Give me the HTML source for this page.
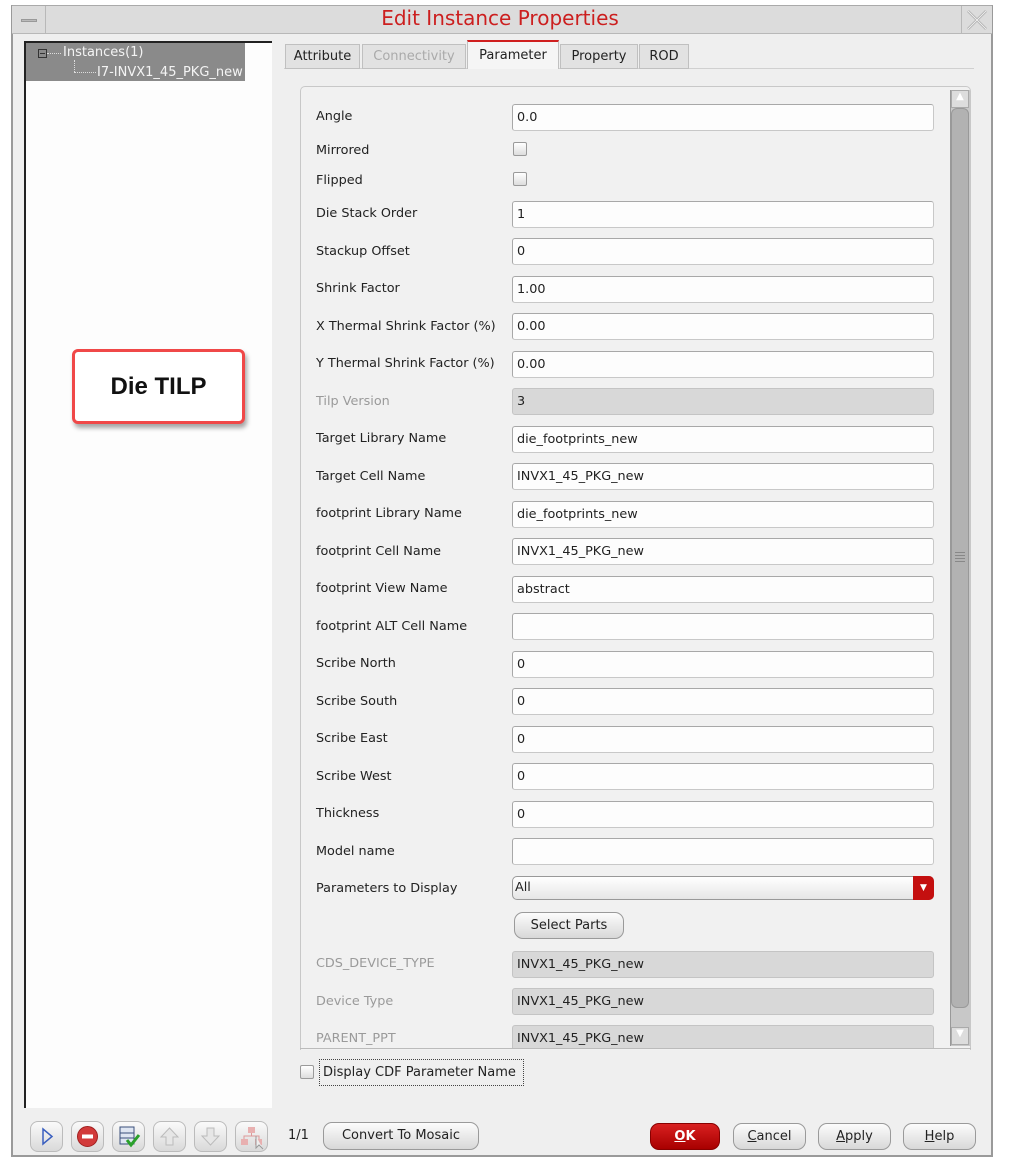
<!DOCTYPE html>
<html><head><meta charset="utf-8">
<style>
*{margin:0;padding:0;box-sizing:border-box}
body{width:1013px;height:1159px;background:#fff;position:relative;overflow:hidden;font-family:"DejaVu Sans","Liberation Sans",sans-serif;font-size:12.8px;color:#222}
.a{position:absolute}
.win{left:11px;top:5px;width:982px;height:1152px;background:#efefef;border:2px solid #9a9a9a;border-top:1px solid #aaa}
.title{left:12px;top:6px;width:980px;height:28px;background:#dcdcdc;border-bottom:1px solid #b8b8b8}
.lbl{position:absolute;left:316px;white-space:nowrap}
.fld{position:absolute;left:512px;width:422px;height:27px;background:#fdfdfd;border:1px solid #c8c8c8;border-top-color:#a8a8a8;border-left-color:#a8a8a8;border-radius:3px;padding:5px 0 0 4px;white-space:nowrap}
.gr{background:#d8d8d8;border-color:#c4c4c4}
.dis{color:#9a9a9a}
.cb{position:absolute;left:513px;width:14px;height:14px;border:1px solid #9a9a9a;border-radius:2px;background:linear-gradient(#fff,#ddd)}
.btn{position:absolute;height:27px;border:1px solid #9a9a9a;border-radius:9px;background:linear-gradient(#fcfcfc,#d8d8d8);text-align:center;line-height:25px;font-size:13px}
.tab{position:absolute;top:44px;height:25px;background:#e2e2e2;border:1px solid #c0c0c0;text-align:center;line-height:23px;font-size:13px}
.ib{position:absolute;top:1121px;width:33px;height:31px;border:1px solid #bbb;border-radius:8px;background:linear-gradient(#fafafa,#d9d9d9)}
</style></head><body>
<div class="a win"></div>
<div class="a title"></div>
<div class="a" style="left:12px;top:6px;width:34px;height:28px;border-right:1px solid #b8b8b8"><div class="a" style="left:9px;top:13px;width:16px;height:3px;background:#bbb;border:1px solid #999"></div></div>
<div class="a" style="left:0;top:6px;width:1000px;text-align:center;color:#cc1f1f;font-size:20px">Edit Instance Properties</div>
<div class="a" style="left:961px;top:6px;width:30px;height:28px;border-left:1px solid #b8b8b8"><svg width="30" height="28"><path d="M6 5 L24 23 M24 5 L6 23" stroke="#aaa" stroke-width="2.5"/><path d="M6 5 L24 23 M24 5 L6 23" stroke="#eee" stroke-width="1"/></svg></div>

<div class="a" style="left:24px;top:41px;width:248px;height:1067px;background:#fdfdfd;border-left:2px solid #222;border-top:2px solid #222"></div>
<div class="a" style="left:26px;top:43px;width:219px;height:38px;background:#8a8a8a"></div>
<div class="a" style="left:38px;top:49px;width:9px;height:9px;border:1px solid #333"><div class="a" style="left:1px;top:3px;width:5px;height:1px;background:#333"></div></div>
<div class="a" style="left:47px;top:53px;width:14px;border-top:1px dotted #ddd"></div>
<div class="a" style="left:74px;top:60px;height:12px;border-left:1px dotted #ddd"></div>
<div class="a" style="left:74px;top:72px;width:22px;border-top:1px dotted #ddd"></div>
<div class="a" style="left:63px;top:45px;color:#f4f4f4;font-size:13px">Instances(1)</div>
<div class="a" style="left:97px;top:65px;color:#f4f4f4;font-size:13px">I7-INVX1_45_PKG_new</div>

<div class="a" style="left:72px;top:349px;width:173px;height:75px;border:3px solid #f04848;border-radius:6px;background:#fff;box-shadow:2px 4px 5px rgba(0,0,0,.35);text-align:center;font-family:'Liberation Sans',sans-serif;font-weight:bold;font-size:24px;line-height:69px;color:#111">Die TILP</div>

<div class="a" style="left:284px;top:68px;width:690px;border-top:1px solid #d0d0d0"></div>
<div class="tab" style="left:285px;width:75px">Attribute</div>
<div class="tab dis" style="left:362px;width:104px;color:#aaa">Connectivity</div>
<div class="tab" style="left:467px;top:40px;height:29px;width:92px;background:#f5f5f5;border-top:2px solid #d01f1f;line-height:27px;border-bottom:none">Parameter</div>
<div class="tab" style="left:560px;width:78px">Property</div>
<div class="tab" style="left:639px;width:50px">ROD</div>

<div class="a" style="left:300px;top:86px;width:671px;height:964px;border:1px solid #c8c8c8;border-bottom:none;border-radius:5px 5px 0 0;background:#f1f1f1"></div>
<div class="a" style="left:950px;top:90px;width:20px;height:956px;background:#c8c8c8;border-left:1px solid #999"></div>
<div class="a" style="left:951px;top:90px;width:18px;height:18px;background:#ddd;border:1px solid #aaa;color:#fff;font-size:10px;text-align:center">▲</div>
<div class="a" style="left:951px;top:108px;width:18px;height:900px;background:#b2b2b2;border:1px solid #999;border-radius:6px"></div>
<div class="a" style="left:955px;top:552px;width:10px;height:10px;background:repeating-linear-gradient(#888 0 1px,transparent 1px 3px)"></div>
<div class="a" style="left:951px;top:1027px;width:18px;height:18px;background:#ddd;border:1px solid #aaa;color:#fff;font-size:10px;text-align:center">▼</div>

<div class="lbl" style="top:109px">Angle</div><div class="fld" style="top:104px">0.0</div>
<div class="lbl" style="top:143px">Mirrored</div><div class="cb" style="top:142px"></div>
<div class="lbl" style="top:173px">Flipped</div><div class="cb" style="top:172px"></div>
<div class="lbl" style="top:206px">Die Stack Order</div><div class="fld" style="top:201px">1</div>
<div class="lbl" style="top:244px">Stackup Offset</div><div class="fld" style="top:238px">0</div>
<div class="lbl" style="top:281px">Shrink Factor</div><div class="fld" style="top:276px">1.00</div>
<div class="lbl" style="top:319px">X Thermal Shrink Factor (%)</div><div class="fld" style="top:313px">0.00</div>
<div class="lbl" style="top:356px">Y Thermal Shrink Factor (%)</div><div class="fld" style="top:351px">0.00</div>
<div class="lbl dis" style="top:394px">Tilp Version</div><div class="fld gr" style="top:388px">3</div>
<div class="lbl" style="top:431px">Target Library Name</div><div class="fld" style="top:426px">die_footprints_new</div>
<div class="lbl" style="top:469px">Target Cell Name</div><div class="fld" style="top:463px">INVX1_45_PKG_new</div>
<div class="lbl" style="top:506px">footprint Library Name</div><div class="fld" style="top:501px">die_footprints_new</div>
<div class="lbl" style="top:544px">footprint Cell Name</div><div class="fld" style="top:538px">INVX1_45_PKG_new</div>
<div class="lbl" style="top:581px">footprint View Name</div><div class="fld" style="top:576px">abstract</div>
<div class="lbl" style="top:619px">footprint ALT Cell Name</div><div class="fld" style="top:613px"></div>
<div class="lbl" style="top:656px">Scribe North</div><div class="fld" style="top:651px">0</div>
<div class="lbl" style="top:694px">Scribe South</div><div class="fld" style="top:688px">0</div>
<div class="lbl" style="top:731px">Scribe East</div><div class="fld" style="top:726px">0</div>
<div class="lbl" style="top:769px">Scribe West</div><div class="fld" style="top:763px">0</div>
<div class="lbl" style="top:806px">Thickness</div><div class="fld" style="top:801px">0</div>
<div class="lbl" style="top:844px">Model name</div><div class="fld" style="top:838px"></div>
<div class="lbl" style="top:881px">Parameters to Display</div>
<div class="fld" style="top:876px;height:24px;padding:3px 0 0 2px;border-radius:5px;background:linear-gradient(#fff,#e6e6e6);border-color:#999">All</div>
<div class="a" style="left:913px;top:876px;width:21px;height:24px;background:#c40f0f;border-radius:0 5px 5px 0;color:#fff;font-size:9px;text-align:center;line-height:24px">▼</div>
<div class="btn" style="left:514px;top:912px;width:110px">Select Parts</div>
<div class="lbl dis" style="top:956px">CDS_DEVICE_TYPE</div><div class="fld gr" style="top:951px">INVX1_45_PKG_new</div>
<div class="lbl dis" style="top:994px">Device Type</div><div class="fld gr" style="top:988px">INVX1_45_PKG_new</div>
<div class="a" style="left:301px;top:1022px;width:648px;height:27px;overflow:hidden">
<div class="lbl dis" style="left:15px;top:9px">PARENT_PPT</div><div class="fld gr" style="left:211px;top:3px">INVX1_45_PKG_new</div></div>
<div class="a" style="left:300px;top:1048px;width:671px;border-top:1px solid #bbb"></div>

<div class="cb" style="left:300px;top:1065px"></div>
<div class="a" style="left:319px;top:1059px;width:205px;height:27px;border:1px dotted #444;padding:5px 0 0 3px;font-size:13px">Display CDF Parameter Name</div>

<div class="ib" style="left:30px"><svg width="31" height="29"><path d="M12 7 L21 14.5 L12 22 Z" fill="none" stroke="#3a5fbf" stroke-width="1.5"/></svg></div>
<div class="ib" style="left:71px"><svg width="31" height="29"><circle cx="15.5" cy="14.5" r="10" fill="#d23a3a" stroke="#a02020"/><rect x="10" y="12.5" width="11" height="4" fill="#fff"/></svg></div>
<div class="ib" style="left:112px"><svg width="31" height="29"><rect x="7" y="5" width="14" height="17" fill="#dfe6f2" stroke="#3a4f7a"/><path d="M7 11H21M7 16H21" stroke="#3a4f7a"/><path d="M14 18 L18 23 L26 13" fill="none" stroke="#2aa02a" stroke-width="3"/></svg></div>
<div class="ib" style="left:153px"><svg width="31" height="29"><path d="M15.5 6 L24 15 H19 V23 H12 V15 H7 Z" fill="#e6e6e6" stroke="#bbb"/></svg></div>
<div class="ib" style="left:194px"><svg width="31" height="29"><path d="M15.5 23 L24 14 H19 V6 H12 V14 H7 Z" fill="#e6e6e6" stroke="#bbb"/></svg></div>
<div class="ib" style="left:235px"><svg width="31" height="29"><rect x="12" y="5" width="7" height="6" fill="#e8b0b0"/><rect x="5" y="17" width="7" height="6" fill="#e8b0b0"/><rect x="19" y="17" width="7" height="6" fill="#e8b0b0"/><path d="M15.5 11V14M8 17V14H23V17" stroke="#d99" fill="none"/><path d="M20 14 L20 26 L23 23 L27 27" fill="#eee" stroke="#999"/></svg></div>
<div class="a" style="left:288px;top:1128px;font-size:13px">1/1</div>
<div class="btn" style="left:323px;top:1122px;width:156px;height:28px">Convert To Mosaic</div>
<div class="btn" style="left:650px;top:1123px;width:70px;background:linear-gradient(#d82020,#a80000);border-color:#800;color:#fff;font-weight:bold"><u>O</u>K</div>
<div class="btn" style="left:733px;top:1123px;width:73px"><u>C</u>ancel</div>
<div class="btn" style="left:818px;top:1123px;width:73px"><u>A</u>pply</div>
<div class="btn" style="left:903px;top:1123px;width:73px"><u>H</u>elp</div>
</body></html>
